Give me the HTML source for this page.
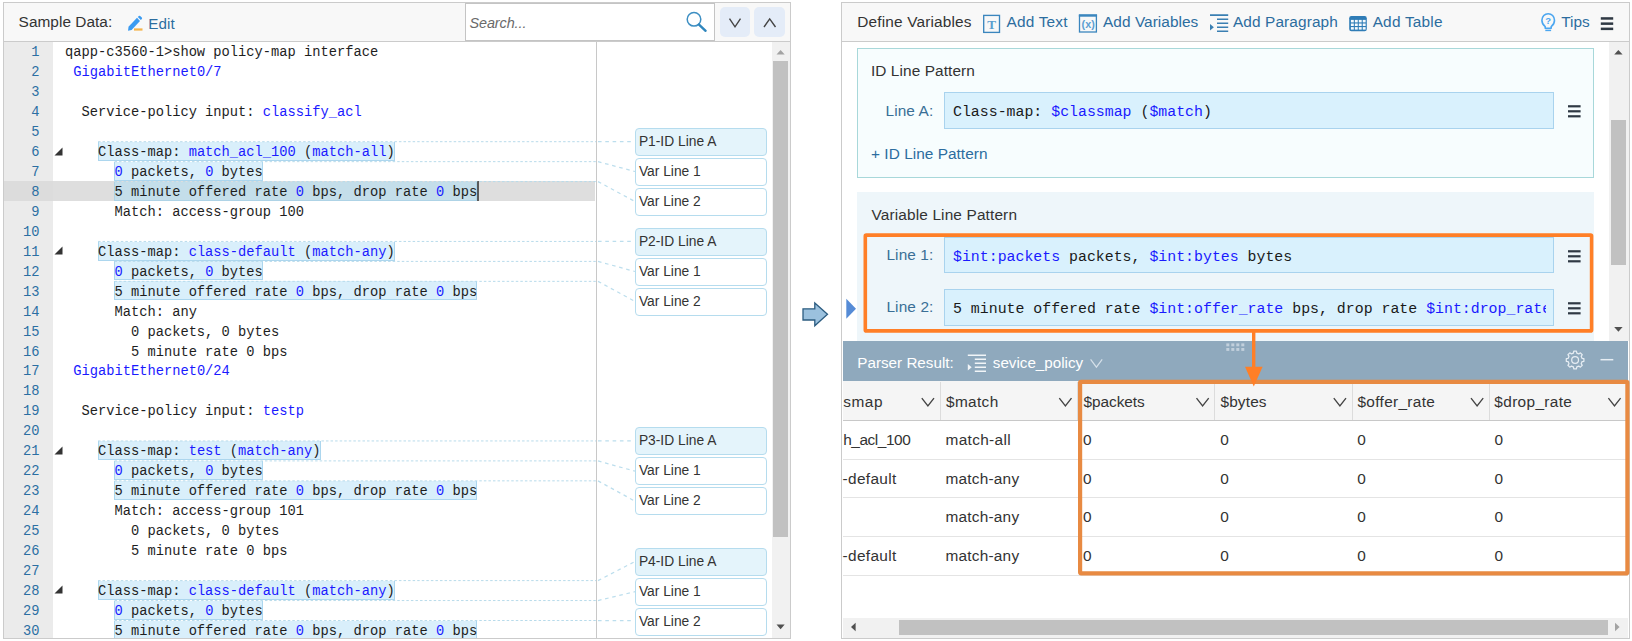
<!DOCTYPE html>
<html lang="en">
<head>
<meta charset="utf-8">
<title>Parser - Define Variables</title>
<style>
html,body{margin:0;padding:0;}
body{width:1632px;height:641px;position:relative;overflow:hidden;background:#fff;font-family:"Liberation Sans",sans-serif;}
div,span,svg{position:absolute;box-sizing:border-box;}
.t{line-height:20px;white-space:nowrap;font-family:"Liberation Sans",sans-serif;}
.m{line-height:20px;white-space:pre;font-family:"Liberation Mono",monospace;}
.m .v,.cl .v{position:static;color:#1a1aff;}
.panel{border:1px solid #cbcbcb;background:#fff;}
.phead{background:#f8f8f8;border-bottom:1px solid #cbcbcb;}
/* code */
.gutter{left:4px;top:42px;width:49px;height:596px;background:#ebebeb;}
.ln{left:4px;width:35.5px;height:20px;line-height:20px;padding-top:1.85px;text-align:right;font-family:"Liberation Mono",monospace;font-size:13.74px;color:#2b6fa3;}
.cl{left:65px;height:20px;line-height:20px;padding-top:1.85px;white-space:pre;font-family:"Liberation Mono",monospace;font-size:13.74px;color:#1e1e1e;}
.currow{left:53px;width:542px;height:20px;background:#dedede;}
.curgut{left:4px;width:49px;height:20px;background:#dcdcdc;}
.hl{height:19px;background:#d9effb;border:1px solid #acd6ee;border-top:none;}
.hl.hc{background:#c4deea;border-color:#aed3e6;}
.fold{left:54.2px;}
.vb{left:635px;width:132px;height:28px;border:1px solid #b5dcee;border-radius:4px;background:#fff;font-size:13.8px;line-height:26px;padding-left:2.9px;color:#333;white-space:nowrap;}
.vb.id{background:#e4f4fb;}
.btn{top:7px;width:30px;height:30px;border-radius:5px;background:#e4ecf8;}
.inp{left:944px;width:610px;height:37px;background:#d9f1fd;border:1px solid #a9d3ee;}
.row{left:843px;width:785px;height:1px;background:#e4e4e4;}
.cdiv{top:382px;width:1px;height:38px;background:#dcdcdc;}
</style>
</head>
<body>
<!-- ================= LEFT PANEL ================= -->
<div class="panel" style="left:3px;top:2px;width:788px;height:637px;"></div>
<div class="phead" style="left:4px;top:3px;width:786px;height:39px;"></div>
<div style="left:465px;top:3px;width:250px;height:38px;background:#fff;border:1px solid #c4c4c4;"></div>
<div class="btn" style="left:720px;"></div>
<div class="btn" style="left:754px;width:31px;"></div>
<div class="gutter"></div>
<div style="left:596px;top:42px;width:1px;height:596px;background:#c8c8c8;"></div>
<div style="left:772px;top:42px;width:18px;height:596px;background:#f1f1f1;"></div>
<div style="left:773px;top:61px;width:15px;height:476px;background:#c1c1c1;"></div>
<div style="left:0;top:0;width:791px;height:638px;overflow:hidden;">
<div class="ln" style="top:41.45px">1</div>
<div class="cl" style="top:41.45px">qapp-c3560-1&gt;show policy-map interface</div>
<div class="ln" style="top:61.4px">2</div>
<div class="cl" style="top:61.4px"> <span class="v">GigabitEthernet0/7</span></div>
<div class="ln" style="top:81.35px">3</div>
<div class="ln" style="top:101.3px">4</div>
<div class="cl" style="top:101.3px">  Service-policy input: <span class="v">classify_acl</span></div>
<div class="ln" style="top:121.25px">5</div>
<div class="ln" style="top:141.2px">6</div>
<div class="hl" style="left:97.99px;top:141.75px;width:296.88px"></div>
<div class="cl" style="top:141.2px">    Class-map: <span class="v">match_acl_100</span> (<span class="v">match-all</span>)</div>
<svg class="fold" style="top:146.50px" width="9" height="9" viewBox="0 0 9 9"><path d="M8.5 0.5V8.5H0.5Z" fill="#333"/></svg>
<div class="ln" style="top:161.15px">7</div>
<div class="hl" style="left:114.48px;top:161.70px;width:148.44px"></div>
<div class="cl" style="top:161.15px">      <span class="v">0</span> packets, <span class="v">0</span> bytes</div>
<div class="currow" style="top:181.1px"></div><div class="curgut" style="top:181.1px"></div>
<div class="ln" style="top:181.1px">8</div>
<div class="hl hc" style="left:114.48px;top:181.65px;width:362.85px"></div>
<div class="cl" style="top:181.1px">      5 minute offered rate <span class="v">0</span> bps, drop rate <span class="v">0</span> bps</div>
<div class="ln" style="top:201.05px">9</div>
<div class="cl" style="top:201.05px">      Match: access-group 100</div>
<div class="ln" style="top:221.0px">10</div>
<div class="ln" style="top:240.95px">11</div>
<div class="hl" style="left:97.99px;top:241.50px;width:296.88px"></div>
<div class="cl" style="top:240.95px">    Class-map: <span class="v">class-default</span> (<span class="v">match-any</span>)</div>
<svg class="fold" style="top:246.25px" width="9" height="9" viewBox="0 0 9 9"><path d="M8.5 0.5V8.5H0.5Z" fill="#333"/></svg>
<div class="ln" style="top:260.9px">12</div>
<div class="hl" style="left:114.48px;top:261.45px;width:148.44px"></div>
<div class="cl" style="top:260.9px">      <span class="v">0</span> packets, <span class="v">0</span> bytes</div>
<div class="ln" style="top:280.85px">13</div>
<div class="hl" style="left:114.48px;top:281.40px;width:362.85px"></div>
<div class="cl" style="top:280.85px">      5 minute offered rate <span class="v">0</span> bps, drop rate <span class="v">0</span> bps</div>
<div class="ln" style="top:300.8px">14</div>
<div class="cl" style="top:300.8px">      Match: any</div>
<div class="ln" style="top:320.75px">15</div>
<div class="cl" style="top:320.75px">        0 packets, 0 bytes</div>
<div class="ln" style="top:340.7px">16</div>
<div class="cl" style="top:340.7px">        5 minute rate 0 bps</div>
<div class="ln" style="top:360.65px">17</div>
<div class="cl" style="top:360.65px"> <span class="v">GigabitEthernet0/24</span></div>
<div class="ln" style="top:380.6px">18</div>
<div class="ln" style="top:400.55px">19</div>
<div class="cl" style="top:400.55px">  Service-policy input: <span class="v">testp</span></div>
<div class="ln" style="top:420.5px">20</div>
<div class="ln" style="top:440.45px">21</div>
<div class="hl" style="left:97.99px;top:441.00px;width:222.66px"></div>
<div class="cl" style="top:440.45px">    Class-map: <span class="v">test</span> (<span class="v">match-any</span>)</div>
<svg class="fold" style="top:445.75px" width="9" height="9" viewBox="0 0 9 9"><path d="M8.5 0.5V8.5H0.5Z" fill="#333"/></svg>
<div class="ln" style="top:460.4px">22</div>
<div class="hl" style="left:114.48px;top:460.95px;width:148.44px"></div>
<div class="cl" style="top:460.4px">      <span class="v">0</span> packets, <span class="v">0</span> bytes</div>
<div class="ln" style="top:480.35px">23</div>
<div class="hl" style="left:114.48px;top:480.90px;width:362.85px"></div>
<div class="cl" style="top:480.35px">      5 minute offered rate <span class="v">0</span> bps, drop rate <span class="v">0</span> bps</div>
<div class="ln" style="top:500.3px">24</div>
<div class="cl" style="top:500.3px">      Match: access-group 101</div>
<div class="ln" style="top:520.25px">25</div>
<div class="cl" style="top:520.25px">        0 packets, 0 bytes</div>
<div class="ln" style="top:540.2px">26</div>
<div class="cl" style="top:540.2px">        5 minute rate 0 bps</div>
<div class="ln" style="top:560.15px">27</div>
<div class="ln" style="top:580.1px">28</div>
<div class="hl" style="left:97.99px;top:580.65px;width:296.88px"></div>
<div class="cl" style="top:580.1px">    Class-map: <span class="v">class-default</span> (<span class="v">match-any</span>)</div>
<svg class="fold" style="top:585.40px" width="9" height="9" viewBox="0 0 9 9"><path d="M8.5 0.5V8.5H0.5Z" fill="#333"/></svg>
<div class="ln" style="top:600.05px">29</div>
<div class="hl" style="left:114.48px;top:600.60px;width:148.44px"></div>
<div class="cl" style="top:600.05px">      <span class="v">0</span> packets, <span class="v">0</span> bytes</div>
<div class="ln" style="top:620.0px">30</div>
<div class="hl" style="left:114.48px;top:620.55px;width:362.85px"></div>
<div class="cl" style="top:620.0px">      5 minute offered rate <span class="v">0</span> bps, drop rate <span class="v">0</span> bps</div>
</div>
<div style="left:477px;top:181px;width:2px;height:20px;background:#5a5a5a;"></div>
<div class="vb id" style="top:128px">P1-ID Line A</div>
<div class="vb" style="top:158px">Var Line 1</div>
<div class="vb" style="top:188px">Var Line 2</div>
<div class="vb id" style="top:228px">P2-ID Line A</div>
<div class="vb" style="top:258px">Var Line 1</div>
<div class="vb" style="top:288px">Var Line 2</div>
<div class="vb id" style="top:427px">P3-ID Line A</div>
<div class="vb" style="top:457px">Var Line 1</div>
<div class="vb" style="top:487px">Var Line 2</div>
<div class="vb id" style="top:548px">P4-ID Line A</div>
<div class="vb" style="top:578px">Var Line 1</div>
<div class="vb" style="top:608px">Var Line 2</div>

<!-- ================= RIGHT PANEL ================= -->
<div class="panel" style="left:841px;top:2px;width:789px;height:637px;"></div>
<div class="phead" style="left:842px;top:3px;width:787px;height:39px;"></div>
<div style="left:857px;top:48px;width:737px;height:130px;background:#f7fdfe;border:1px solid #a8d8da;"></div>
<div style="left:857px;top:192px;width:737px;height:149px;background:#eef6fa;"></div>
<div class="inp" style="top:92px;"></div>
<div class="inp" style="top:237px;height:36px;"></div>
<div class="inp" style="top:289px;"></div>
<div style="left:1609px;top:42px;width:20px;height:299px;background:#f1f1f1;"></div>
<div style="left:1611px;top:119.5px;width:15px;height:145px;background:#c1c1c1;"></div>
<!-- parser result -->
<div style="left:843px;top:341px;width:785px;height:40px;background:#8fa9bd;"></div>
<div style="left:843px;top:381px;width:785px;height:40px;background:#f5f5f5;border-bottom:1px solid #c8c8c8;"></div>
<div class="cdiv" style="left:940px;"></div>
<div class="cdiv" style="left:1077px;"></div>
<div class="cdiv" style="left:1214px;"></div>
<div class="cdiv" style="left:1352px;"></div>
<div class="cdiv" style="left:1489px;"></div>
<div class="row" style="top:459px;"></div>
<div class="row" style="top:497px;"></div>
<div class="row" style="top:536px;"></div>
<div class="row" style="top:575px;"></div>
<div style="left:843px;top:618px;width:785px;height:20px;background:#f1f1f1;"></div>
<div style="left:899px;top:619.5px;width:709px;height:15px;background:#c1c1c1;"></div>

<span class="t" style="left:18.61px;top:12px;font-size:15.4px;color:#333;letter-spacing:0.03125px;">Sample Data:</span>
<span class="t" style="left:148.14px;top:14px;font-size:15.2px;color:#2c6d9f;letter-spacing:0.15625px;">Edit</span>
<span class="t" style="left:469.56px;top:13px;font-size:14.4px;color:#6a6a6a;letter-spacing:-0.09375px;font-style:italic;">Search...</span>
<span class="t" style="left:857.34px;top:12px;font-size:15.4px;color:#333;letter-spacing:0.15625px;">Define Variables</span>
<span class="t" style="left:1006.44px;top:12px;font-size:15.4px;color:#2c6d9f;letter-spacing:0.203125px;">Add Text</span>
<span class="t" style="left:1103.04px;top:12px;font-size:15.4px;color:#2c6d9f;letter-spacing:0.046875px;">Add Variables</span>
<span class="t" style="left:1232.94px;top:12px;font-size:15.4px;color:#2c6d9f;letter-spacing:0.109375px;">Add Paragraph</span>
<span class="t" style="left:1372.64px;top:12px;font-size:15.4px;color:#2c6d9f;letter-spacing:0.21875px;">Add Table</span>
<span class="t" style="left:1561.31px;top:12px;font-size:15.4px;color:#2c6d9f;letter-spacing:-0.03125px;">Tips</span>
<span class="t" style="left:870.91px;top:61px;font-size:15.4px;color:#333;letter-spacing:0.09375px;">ID Line Pattern</span>
<span class="t" style="left:885.54px;top:101px;font-size:15.4px;color:#3a6f96;letter-spacing:0.09375px;">Line A:</span>
<span class="t" style="left:871.05px;top:144px;font-size:15.4px;color:#2c6d9f;letter-spacing:0.03125px;">+ ID Line Pattern</span>
<span class="t" style="left:871.54px;top:205px;font-size:15.4px;color:#333;letter-spacing:0.140625px;">Variable Line Pattern</span>
<span class="t" style="left:886.44px;top:245px;font-size:15.4px;color:#3a6f96;letter-spacing:0.109375px;">Line 1:</span>
<span class="t" style="left:886.44px;top:297px;font-size:15.4px;color:#3a6f96;letter-spacing:0.125px;">Line 2:</span>
<span class="m" style="left:953px;top:101.53px;font-size:14.88px;color:#1a1a1a;">Class-map: <span class="v">$classmap</span> (<span class="v">$match</span>)</span>
<span class="m" style="left:953px;top:246.53px;font-size:14.88px;color:#1a1a1a;"><span class="v">$int:packets</span> packets, <span class="v">$int:bytes</span> bytes</span>
<span class="m" style="left:953px;top:298.53px;font-size:14.88px;color:#1a1a1a;width:593px;overflow:hidden;white-space:pre;">5 minute offered rate <span class="v">$int:offer_rate</span> bps, drop rate <span class="v">$int:drop_rate</span></span>
<span class="t" style="left:857.34px;top:353px;font-size:15.2px;color:#fff;letter-spacing:0.015625px;">Parser Result:</span>
<span class="t" style="left:992.81px;top:353px;font-size:15.2px;color:#fff;letter-spacing:0.0px;">sevice_policy</span>
<span class="t" style="left:843.21px;top:392px;font-size:15.4px;color:#333;letter-spacing:0.5625px;">smap</span>
<span class="t" style="left:946.03px;top:392px;font-size:15.4px;color:#333;letter-spacing:0.34375px;">$match</span>
<span class="t" style="left:1083.53px;top:392px;font-size:15.4px;color:#333;letter-spacing:-0.0625px;">$packets</span>
<span class="t" style="left:1220.43px;top:392px;font-size:15.4px;color:#333;letter-spacing:0.15625px;">$bytes</span>
<span class="t" style="left:1357.43px;top:392px;font-size:15.4px;color:#333;letter-spacing:0.328125px;">$offer_rate</span>
<span class="t" style="left:1494.33px;top:392px;font-size:15.4px;color:#333;letter-spacing:0.34375px;">$drop_rate</span>
<span class="t" style="left:945.49px;top:430px;font-size:15.4px;color:#333;letter-spacing:0.34375px;">match-all</span>
<span class="t" style="left:843.19px;top:430px;font-size:15.4px;color:#333;letter-spacing:-0.4375px;">h_acl_100</span>
<span class="t" style="left:1082.97px;top:430px;font-size:15.4px;color:#333;letter-spacing:0.0px;">0</span>
<span class="t" style="left:1220.17px;top:430px;font-size:15.4px;color:#333;letter-spacing:0.0px;">0</span>
<span class="t" style="left:1357.37px;top:430px;font-size:15.4px;color:#333;letter-spacing:0.0px;">0</span>
<span class="t" style="left:1494.57px;top:430px;font-size:15.4px;color:#333;letter-spacing:0.0px;">0</span>
<span class="t" style="left:945.49px;top:469px;font-size:15.4px;color:#333;letter-spacing:0.21875px;">match-any</span>
<span class="t" style="left:842.61px;top:469px;font-size:15.4px;color:#333;letter-spacing:0.328125px;">-default</span>
<span class="t" style="left:1082.97px;top:469px;font-size:15.4px;color:#333;letter-spacing:0.0px;">0</span>
<span class="t" style="left:1220.17px;top:469px;font-size:15.4px;color:#333;letter-spacing:0.0px;">0</span>
<span class="t" style="left:1357.37px;top:469px;font-size:15.4px;color:#333;letter-spacing:0.0px;">0</span>
<span class="t" style="left:1494.57px;top:469px;font-size:15.4px;color:#333;letter-spacing:0.0px;">0</span>
<span class="t" style="left:945.49px;top:507px;font-size:15.4px;color:#333;letter-spacing:0.21875px;">match-any</span>
<span class="t" style="left:1082.97px;top:507px;font-size:15.4px;color:#333;letter-spacing:0.0px;">0</span>
<span class="t" style="left:1220.17px;top:507px;font-size:15.4px;color:#333;letter-spacing:0.0px;">0</span>
<span class="t" style="left:1357.37px;top:507px;font-size:15.4px;color:#333;letter-spacing:0.0px;">0</span>
<span class="t" style="left:1494.57px;top:507px;font-size:15.4px;color:#333;letter-spacing:0.0px;">0</span>
<span class="t" style="left:945.49px;top:546px;font-size:15.4px;color:#333;letter-spacing:0.21875px;">match-any</span>
<span class="t" style="left:842.61px;top:546px;font-size:15.4px;color:#333;letter-spacing:0.328125px;">-default</span>
<span class="t" style="left:1082.97px;top:546px;font-size:15.4px;color:#333;letter-spacing:0.0px;">0</span>
<span class="t" style="left:1220.17px;top:546px;font-size:15.4px;color:#333;letter-spacing:0.0px;">0</span>
<span class="t" style="left:1357.37px;top:546px;font-size:15.4px;color:#333;letter-spacing:0.0px;">0</span>
<span class="t" style="left:1494.57px;top:546px;font-size:15.4px;color:#333;letter-spacing:0.0px;">0</span>

<!-- ================= ICONS / OVERLAY ================= -->
<svg style="left:0;top:0;" width="1632" height="641" viewBox="0 0 1632 641" fill="none">
<path d="M98.0 141.7H596" stroke="#b8dbeb" stroke-width="1" stroke-dasharray="2.5 2.06"/>
<path d="M598 141.7H632" stroke="#bcdeed" stroke-width="1.25" stroke-dasharray="3.6 3.7"/>
<path d="M114.5 161.65H596" stroke="#b8dbeb" stroke-width="1" stroke-dasharray="2.5 2.06"/>
<path d="M598 161.65L635 171.5" stroke="#bcdeed" stroke-width="1.25" stroke-dasharray="3.6 3.7"/>
<path d="M114.5 181.6H596" stroke="#b8dbeb" stroke-width="1" stroke-dasharray="2.5 2.06"/>
<path d="M598 181.6L635 201.5" stroke="#bcdeed" stroke-width="1.25" stroke-dasharray="3.6 3.7"/>
<path d="M98.0 241.45H596" stroke="#b8dbeb" stroke-width="1" stroke-dasharray="2.5 2.06"/>
<path d="M598 241.45H632" stroke="#bcdeed" stroke-width="1.25" stroke-dasharray="3.6 3.7"/>
<path d="M114.5 261.4H596" stroke="#b8dbeb" stroke-width="1" stroke-dasharray="2.5 2.06"/>
<path d="M598 261.4L635 271.5" stroke="#bcdeed" stroke-width="1.25" stroke-dasharray="3.6 3.7"/>
<path d="M114.5 281.35H596" stroke="#b8dbeb" stroke-width="1" stroke-dasharray="2.5 2.06"/>
<path d="M598 281.35L635 301.5" stroke="#bcdeed" stroke-width="1.25" stroke-dasharray="3.6 3.7"/>
<path d="M98.0 440.95H596" stroke="#b8dbeb" stroke-width="1" stroke-dasharray="2.5 2.06"/>
<path d="M598 440.95H632" stroke="#bcdeed" stroke-width="1.25" stroke-dasharray="3.6 3.7"/>
<path d="M114.5 460.9H596" stroke="#b8dbeb" stroke-width="1" stroke-dasharray="2.5 2.06"/>
<path d="M598 460.9L635 471.2" stroke="#bcdeed" stroke-width="1.25" stroke-dasharray="3.6 3.7"/>
<path d="M114.5 480.85H596" stroke="#b8dbeb" stroke-width="1" stroke-dasharray="2.5 2.06"/>
<path d="M598 480.85L635 501.2" stroke="#bcdeed" stroke-width="1.25" stroke-dasharray="3.6 3.7"/>
<path d="M98.0 580.6H596" stroke="#b8dbeb" stroke-width="1" stroke-dasharray="2.5 2.06"/>
<path d="M598 580.6L635 561.5" stroke="#bcdeed" stroke-width="1.25" stroke-dasharray="3.6 3.7"/>
<path d="M114.5 600.55H596" stroke="#b8dbeb" stroke-width="1" stroke-dasharray="2.5 2.06"/>
<path d="M598 600.55L635 591.7" stroke="#bcdeed" stroke-width="1.25" stroke-dasharray="3.6 3.7"/>
<path d="M114.5 620.5H596" stroke="#b8dbeb" stroke-width="1" stroke-dasharray="2.5 2.06"/>
<path d="M598 620.5H632" stroke="#bcdeed" stroke-width="1.25" stroke-dasharray="3.6 3.7"/>
<g><path d="M128 30.7L128.5 26.7L137 17.7L140 20.9L131.6 29.9Z" fill="#3b9bf1"/><path d="M137.8 16.9L138.8 15.9Q139.5 15.4 140.2 16L141.8 17.6Q142.4 18.3 141.8 19L140.8 20Z" fill="#3b9bf1"/><rect x="134" y="28.4" width="8.5" height="2.2" fill="#f6b44a"/></g>
<circle cx="694" cy="19.3" r="6.8" stroke="#3d8fc3" stroke-width="1.5"/>
<path d="M699 24.6L705.6 30.8" stroke="#2f86bd" stroke-width="2.4" stroke-linecap="round"/>
<path d="M729.5 18.7L735 26.8L740.5 18.7" stroke="#444" stroke-width="1.4"/>
<path d="M764 27L769.7 18.9L775.5 27" stroke="#444" stroke-width="1.4"/>
<path d="M776.5 54.6L780.6 50L784.7 54.6Z" fill="#a3a3a3"/>
<path d="M776.5 624.5L780.6 629.2L784.7 624.5Z" fill="#505050"/>
<path d="M1614.2 54.6L1618.4 50L1622.6 54.6Z" fill="#505050"/>
<path d="M1614.2 327L1618.4 331.8L1622.6 327Z" fill="#505050"/>
<path d="M855.6 622.8L851 627L855.6 631.2Z" fill="#505050"/>
<path d="M1615 622.8L1619.6 627L1615 631.2Z" fill="#a3a3a3"/>
<path d="M803 308.8H814.8V303L827.5 314.3L814.8 325.7V320H803Z" fill="#9bc1de" stroke="#2c5c80" stroke-width="1.3" stroke-linejoin="miter"/>
<path d="M846.3 298.8L856 308.8L846.3 318.8Z" fill="#558bd6"/>
<rect x="983.7" y="15.4" width="15.8" height="17" stroke="#3b86be" stroke-width="1.35"/>
<text x="991.6" y="28.7" font-family="Liberation Serif, serif" font-weight="bold" font-size="13.2" fill="#5b9fcf" text-anchor="middle">T</text>
<rect x="1079.5" y="15.3" width="16.9" height="16.7" stroke="#3b86be" stroke-width="1.3"/>
<rect x="1078.85" y="14.3" width="18.2" height="2.4" fill="#3b86be"/>
<text x="1088.2" y="27.8" font-family="Liberation Sans, sans-serif" font-weight="bold" font-size="10.8" fill="#5d9fd2" text-anchor="middle">(x)</text>
<path d="M1210 15.100000000000001H1228.2M1217 19.200000000000003H1228.2M1217 23.200000000000003H1228.2M1217 27.200000000000003H1228.2M1217 31.2H1228.2" stroke="#3a7fb2" stroke-width="1.6"/>
<path d="M1210 24.0L1213.9 27.200000000000003L1210 30.400000000000002Z" fill="#3a7fb2"/>
<rect x="1349.2" y="16" width="17.6" height="15.2" rx="2.2" fill="#2f7cb6"/>
<rect x="1350.90" y="19.90" width="2.9" height="2.5" fill="#f6fafd"/>
<rect x="1354.85" y="19.90" width="2.9" height="2.5" fill="#f6fafd"/>
<rect x="1358.80" y="19.90" width="2.9" height="2.5" fill="#f6fafd"/>
<rect x="1362.75" y="19.90" width="2.9" height="2.5" fill="#f6fafd"/>
<rect x="1350.90" y="23.50" width="2.9" height="2.5" fill="#f6fafd"/>
<rect x="1354.85" y="23.50" width="2.9" height="2.5" fill="#f6fafd"/>
<rect x="1358.80" y="23.50" width="2.9" height="2.5" fill="#f6fafd"/>
<rect x="1362.75" y="23.50" width="2.9" height="2.5" fill="#f6fafd"/>
<rect x="1350.90" y="27.10" width="2.9" height="2.5" fill="#f6fafd"/>
<rect x="1354.85" y="27.10" width="2.9" height="2.5" fill="#f6fafd"/>
<rect x="1358.80" y="27.10" width="2.9" height="2.5" fill="#f6fafd"/>
<rect x="1362.75" y="27.10" width="2.9" height="2.5" fill="#f6fafd"/>
<path d="M1545.2 26.6C1543 25 1541.9 22.8 1541.9 20.3C1541.9 16.4 1544.8 13.7 1548.2 13.7C1551.6 13.7 1554.5 16.4 1554.5 20.3C1554.5 22.8 1553.4 25 1551.2 26.6V28.2H1545.2Z" stroke="#4ba6f0" stroke-width="1.6" stroke-linejoin="round"/>
<path d="M1545.3 30.4H1551.1" stroke="#4ba6f0" stroke-width="1.5"/>
<text x="1548.2" y="24" font-family="Liberation Sans, sans-serif" font-weight="bold" font-size="9.5" fill="#4ba6f0" text-anchor="middle">?</text>
<rect x="1600.8" y="17.20" width="12.4" height="2.5" fill="#2f3944"/>
<rect x="1600.8" y="22.40" width="12.4" height="2.5" fill="#2f3944"/>
<rect x="1600.8" y="27.60" width="12.4" height="2.5" fill="#2f3944"/>
<rect x="1568" y="105.20" width="12.6" height="2.2" fill="#2f3944"/>
<rect x="1568" y="110.20" width="12.6" height="2.2" fill="#2f3944"/>
<rect x="1568" y="115.20" width="12.6" height="2.2" fill="#2f3944"/>
<rect x="1568" y="250.20" width="12.6" height="2.2" fill="#2f3944"/>
<rect x="1568" y="255.20" width="12.6" height="2.2" fill="#2f3944"/>
<rect x="1568" y="260.20" width="12.6" height="2.2" fill="#2f3944"/>
<rect x="1568" y="302.20" width="12.6" height="2.2" fill="#2f3944"/>
<rect x="1568" y="307.20" width="12.6" height="2.2" fill="#2f3944"/>
<rect x="1568" y="312.20" width="12.6" height="2.2" fill="#2f3944"/>
<path d="M967.8 355.2H986.0M974.8 359.29999999999995H986.0M974.8 363.29999999999995H986.0M974.8 367.29999999999995H986.0M974.8 371.29999999999995H986.0" stroke="#f1f5f8" stroke-width="1.55"/>
<path d="M967.8 364.09999999999997L971.6999999999999 367.29999999999995L967.8 370.5Z" fill="#f1f5f8"/>
<path d="M1090.6 359.4L1096.4 367.2L1102.2 359.4" stroke="#d5e0e9" stroke-width="1.2"/>
<rect x="1226.3" y="343.4" width="3" height="2.9" fill="#c2d0dc"/>
<rect x="1231.3" y="343.4" width="3" height="2.9" fill="#c2d0dc"/>
<rect x="1236.3" y="343.4" width="3" height="2.9" fill="#c2d0dc"/>
<rect x="1241.3" y="343.4" width="3" height="2.9" fill="#c2d0dc"/>
<rect x="1226.3" y="348.0" width="3" height="2.9" fill="#c2d0dc"/>
<rect x="1231.3" y="348.0" width="3" height="2.9" fill="#c2d0dc"/>
<rect x="1236.3" y="348.0" width="3" height="2.9" fill="#c2d0dc"/>
<rect x="1241.3" y="348.0" width="3" height="2.9" fill="#c2d0dc"/>
<path d="M1573.78 351.20L1576.42 351.20L1576.81 353.11L1578.76 353.92L1580.39 352.84L1582.26 354.71L1581.18 356.34L1581.99 358.29L1583.90 358.68L1583.90 361.32L1581.99 361.71L1581.18 363.66L1582.26 365.29L1580.39 367.16L1578.76 366.08L1576.81 366.89L1576.42 368.80L1573.78 368.80L1573.39 366.89L1571.44 366.08L1569.81 367.16L1567.94 365.29L1569.02 363.66L1568.21 361.71L1566.30 361.32L1566.30 358.68L1568.21 358.29L1569.02 356.34L1567.94 354.71L1569.81 352.84L1571.44 353.92L1573.39 353.11Z" stroke="#e6edf3" stroke-width="1.25" stroke-linejoin="round"/>
<circle cx="1575.1" cy="360" r="3.4" stroke="#e6edf3" stroke-width="1.25"/>
<path d="M1600.5 359.7H1613.3" stroke="#e6edf3" stroke-width="1.5"/>
<path d="M921.8 398.2L927.9 406L934.0 398.2" stroke="#444" stroke-width="1.35"/>
<path d="M1059.3 398.2L1065.4 406L1071.5 398.2" stroke="#444" stroke-width="1.35"/>
<path d="M1196.5 398.2L1202.6 406L1208.7 398.2" stroke="#444" stroke-width="1.35"/>
<path d="M1333.8 398.2L1339.9 406L1346.0 398.2" stroke="#444" stroke-width="1.35"/>
<path d="M1471.0 398.2L1477.1 406L1483.2 398.2" stroke="#444" stroke-width="1.35"/>
<path d="M1608.4 398.2L1614.5 406L1620.6 398.2" stroke="#444" stroke-width="1.35"/>
<rect x="1080.1" y="381.8" width="547.3" height="191.5" rx="1" stroke="#e88a42" stroke-width="4.2"/>
<rect x="865.3" y="235.1" width="726.3" height="95.8" rx="1" stroke="#ff7f27" stroke-width="3.6"/>
<path d="M1253.7 332V368" stroke="#ff7f27" stroke-width="3.4"/>
<path d="M1245 366.7H1262.6L1253.8 386.6Z" fill="#ff7f27"/>
</svg>
</body>
</html>
